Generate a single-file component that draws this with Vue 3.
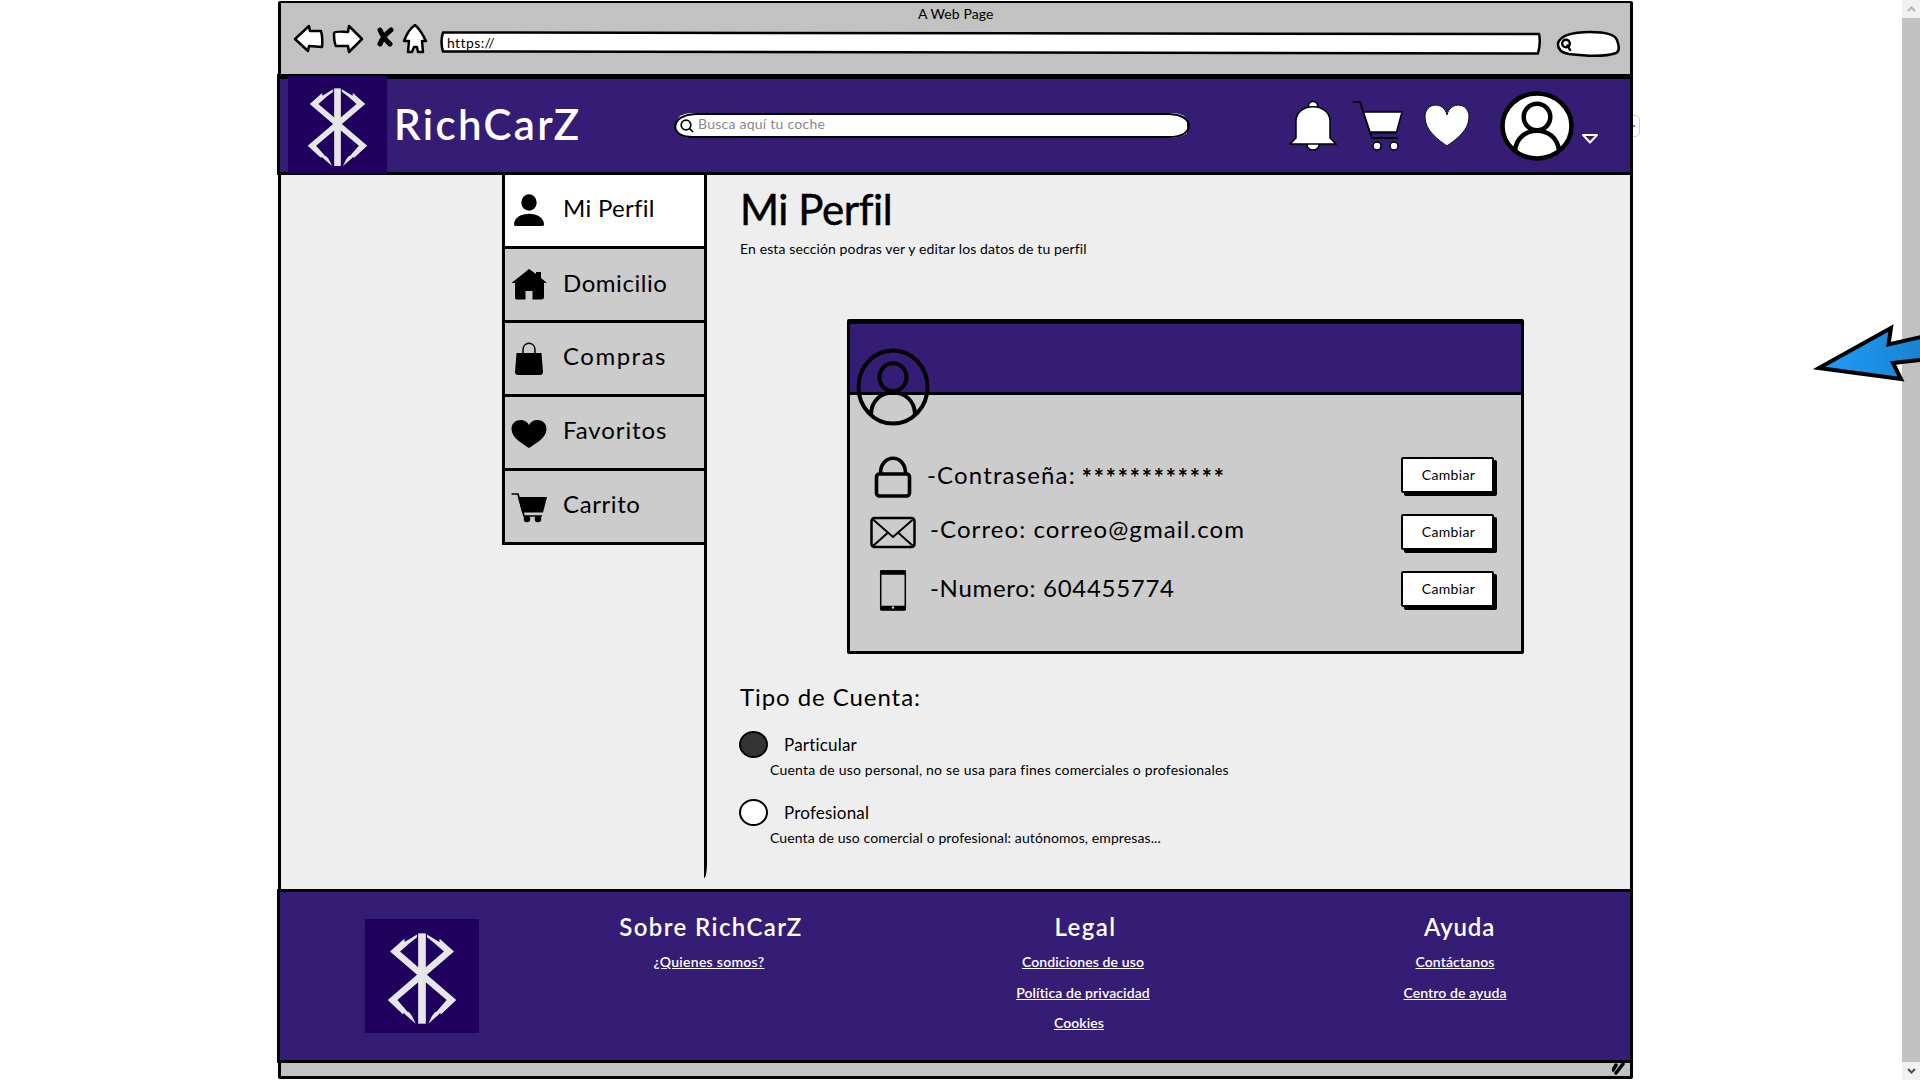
<script setup>
const nav = [
  { label: 'Mi Perfil', icon: 'user' },
  { label: 'Domicilio', icon: 'home' },
  { label: 'Compras', icon: 'bag' },
  { label: 'Favoritos', icon: 'heart' },
  { label: 'Carrito', icon: 'trolley' }
]
const rows = [
  { icon: 'lock', text: '-Contraseña:', secret: '************' },
  { icon: 'mail', text: '-Correo: correo@gmail.com' },
  { icon: 'phone', text: '-Numero: 604455774' }
]
const types = [
  { name: 'Particular', on: true, text: 'Cuenta de uso personal, no se usa para fines comerciales o profesionales' },
  { name: 'Profesional', on: false, text: 'Cuenta de uso comercial o profesional: autónomos, empresas...' }
]
const rune = '120,312 157,279 158,287 190,268 190,275 172,289 146,312 203,361 292,437 252,474 250,470 246,475 219,498 229,478 237,468 240,468 267,437 203,383'
</script>

<template>
  <div class="stage">
    <main class="window">
      <div class="chrome">
        <div class="page-title">A Web Page</div>
        <div class="toolbar">
          <svg class="back" width="31" height="30" viewBox="0 0 31 30"><path d="M2 15 L16 2 L17 7 L28 7 Q30 14 29 23 L16 22 L15 27 Z" /></svg>
          <svg class="forward" width="33" height="30" viewBox="0 0 33 30"><path d="M2 9 Q3 7 16 8 L17 2 L30 15 L17 28 L16 22 L4 22 Q2 19 2 9 Z" /></svg>
          <svg class="stop" width="20" height="24" viewBox="0 0 20 24"><path d="M4 3 Q8 12 14 17 M15 3 Q7 9 4 17" /></svg>
          <svg class="go-home" width="26" height="31" viewBox="0 0 26 31"><path d="M13 1 Q18 5 24 17 L20 17 L21 28 L16 28 L15 23 L12 23 L10 28 L6 28 L7 17 L2 17 Q6 6 13 1 Z" /></svg>
          <div class="url">
            <svg width="1102" height="26" viewBox="0 0 1102 26"><path d="M3 2.500 L1099 4 Q1101 12 1098 23.500 L3 21.500 Q0 12 3 2.500 Z" /></svg>
            <span>https://</span>
          </div>
          <svg class="find" width="66" height="28" viewBox="0 0 66 28"><path d="M13 24 Q1 22 2 13 Q6 2 34 2 Q58 2 61 10 Q65 21 60 23 Q46 28 13 24 Z" /><circle cx="10" cy="13.500" r="3.800" fill="none" /><path d="M11.500 15.500 L14 20" /></svg>
        </div>
      </div>

      <header class="top">
        <svg class="logo" viewBox="55 228 296 294" preserveAspectRatio="none"><rect x="55" y="228" width="296" height="294" fill="#20005f" /><g fill="#e6e6e6"><rect x="193" y="265" width="20" height="233" /><polygon :points="rune" /><polygon :points="rune" transform="translate(406 0) scale(-1 1)" /></g></svg>
        <div class="brand">RichCarZ</div>
        <div class="search">
          <svg width="518" height="30" viewBox="0 0 518 30"><path d="M4 9 Q6 3 18 2 H500 Q512 3 514 9 V22 Q510 26 498 27 H20 Q4 27 3 18 Z" fill="#fff" stroke="none" /><path d="M23 3 H496 Q516 4 516 16 Q513 26 496 26 H23 Q4 27 2 16 Q3 4 23 3 Z" fill="none" /><circle cx="13" cy="14" r="4.800" fill="none" stroke-width="1.700" /><path d="M16.500 17.500 L20 21" stroke-width="1.700" /></svg>
          <span>Busca aquí tu coche</span>
        </div>
        <svg class="bell" width="48" height="52" viewBox="0 0 48 52"><g fill="#fff" stroke="#000" stroke-width="1.500"><circle cx="24" cy="6" r="4.500" /><ellipse cx="24" cy="45" rx="6" ry="5" /><path d="M7 38 V21 C7 2 41 2 41 21 V38 L47 44 H1 Z" /></g></svg>
        <svg class="cart" width="52" height="54" viewBox="0 0 52 54"><path d="M1 3 H8 L20 39 H46 M17 33.500 H45" fill="none" stroke="#000" stroke-width="2" /><path d="M11.500 13 H50 L44.500 33 H18 Z" fill="#fff" stroke="#000" stroke-width="1.500" /><circle cx="25" cy="47" r="4" fill="#fff" stroke="#000" stroke-width="1.500" /><circle cx="42" cy="47" r="4" fill="#fff" stroke="#000" stroke-width="1.500" /></svg>
        <svg class="love" width="46" height="44" viewBox="0 0 46 44"><path d="M23 42 C15 36 1 27 1 13 C1 -2 20 -3 23 11 C26 -3 45 -2 45 13 C45 27 31 36 23 42 Z" fill="#fff" stroke="#111" /></svg>
        <svg class="avatar" width="74" height="70" viewBox="0 0 74 70" stroke="#000" stroke-width="4.500" fill="#fff"><ellipse cx="37" cy="35" rx="34.500" ry="32.500" /><circle cx="37" cy="26" r="13.300" /><path d="M15 60 C17 33 57 33 59 60" fill="none" /></svg>
        <svg class="caret" width="18" height="12" viewBox="0 0 18 12"><path d="M2 2 H16 L9 9.500 Z" fill="none" stroke="#fff" stroke-width="2" stroke-linejoin="round" /></svg>
      </header>

      <section class="page">
        <aside class="side">
          <nav>
            <a v-for="n in nav" :key="n.label" :class="['item', n.icon]">
              <svg width="36" height="36" viewBox="0 0 36 36">
                <template v-if="n.icon === 'user'"><ellipse cx="18" cy="10.500" rx="7.700" ry="8.200" /><path d="M3 32.500 C3 18 33 18 33 32.500 Q33 34 31 34 H5 Q3 34 3 32.500 Z" /></template>
                <path v-else-if="n.icon === 'home'" d="M18 2 L25 7 V5 H30 V11 L36 16 H33 V30 Q33 32.500 30.500 32.500 H21.500 V24 H14.500 V32.500 H5.500 Q4 32.500 4 30 V16 H0.500 Z" />
                <template v-else-if="n.icon === 'bag'"><path d="M12 13 V9 C12 0 24 0 24 9 V13" fill="none" stroke="#000" stroke-width="1.500" /><path d="M5.500 12 H30.500 L32 31 Q32 34 29 34 H7 Q4 34 4 31 Z" /></template>
                <path v-else-if="n.icon === 'heart'" d="M18 32 C12 28 .5 22 .5 13 C.5 3 14 1 18 9 C22 1 35.500 3 35.500 13 C35.500 22 24 28 18 32 Z" />
                <template v-else><path d="M.5 4 H7 L13 26 H31" fill="none" stroke="#000" stroke-width="1.700" /><path d="M7 7 H36 L32 22.500 H11 Z" /><circle cx="16" cy="29" r="3.300" /><circle cx="27" cy="29" r="3.300" /></template>
              </svg>
              <span>{{ n.label }}</span>
            </a>
          </nav>
        </aside>
        <article class="content">
          <h1>Mi Perfil</h1>
          <p class="lead">En esta sección podras ver y editar los datos de tu perfil</p>
          <section class="card">
            <div class="band"></div>
            <svg class="face" width="74" height="78" viewBox="0 0 74 78" fill="none" stroke="#000" stroke-width="4"><ellipse cx="37" cy="39" rx="34.500" ry="36.500" /><ellipse cx="37" cy="29.300" rx="13.500" ry="14" /><path d="M15 67 C15 37 59 37 59 67" /></svg>
            <div v-for="r in rows" :key="r.icon" :class="['row', r.icon]">
              <div class="glyph">
                <svg width="46" height="44" viewBox="0 0 46 44" fill="none" stroke="#000">
                  <template v-if="r.icon === 'lock'"><rect x="6.500" y="18" width="33" height="22" rx="3" stroke-width="3.600" /><path d="M10.500 18 C10 -3 36 -3 35.500 18" stroke-width="3.600" /></template>
                  <template v-else-if="r.icon === 'mail'"><rect x="1.500" y="7" width="43" height="29" rx="3" stroke-width="2.500" /><path d="M2.500 8 L23 26 L43.500 8 M3 35 L17.500 22 M43 35 L28.500 22" stroke-width="2" /></template>
                  <template v-else><rect x="10.700" y="2" width="24.600" height="39" rx="1.500" stroke-width="1.500" /><path d="M10 3.500 H36 M10 39 H36" stroke-width="4.500" /><circle cx="23" cy="38.500" r="1.200" fill="#ccc" stroke="none" /></template>
                </svg>
              </div>
              <div class="text">{{ r.text }}<b v-if="r.secret">{{ r.secret }}</b></div>
              <button>Cambiar</button>
            </div>
          </section>
          <h2>Tipo de Cuenta:</h2>
          <div v-for="t in types" :key="t.name" class="type">
            <div class="option"><i :class="{ on: t.on }"></i><span>{{ t.name }}</span></div>
            <p>{{ t.text }}</p>
          </div>
        </article>
      </section>

      <footer class="foot">
        <svg class="logo" viewBox="55 228 296 294" preserveAspectRatio="none"><rect x="55" y="228" width="296" height="294" fill="#20005f" /><g fill="#e6e6e6"><rect x="193" y="265" width="20" height="233" /><polygon :points="rune" /><polygon :points="rune" transform="translate(406 0) scale(-1 1)" /></g></svg>
        <div class="col about"><h3>Sobre RichCarZ</h3><a>¿Quienes somos?</a></div>
        <div class="col legal"><h3>Legal</h3><a>Condiciones de uso</a><a>Política de privacidad</a><a class="cookies">Cookies</a></div>
        <div class="col help"><h3>Ayuda</h3><a>Contáctanos</a><a>Centro de ayuda</a></div>
      </footer>
      <div class="status"><svg width="18" height="13" viewBox="0 0 18 13"><path d="M1 7 L4 2 M4 10 L11 1" stroke="#000" stroke-width="3.500" stroke-linecap="round" /></svg></div>
    </main>
    <div class="tab"><i></i></div>
    <svg class="pointer" width="110" height="64" viewBox="0 0 110 64"><defs><linearGradient id="g"><stop offset="0.200" stop-color="#1e98f2" /><stop offset="1" stop-color="#1a80cc" /></linearGradient></defs><path d="M9 47 L81 7 L78.500 23.500 L120 14 V38 L83 42 L91 58 Z" fill="url(#g)" stroke="#000" stroke-width="4" stroke-miterlimit="8" /></svg>
    <div class="scroll">
      <svg width="18" height="18" viewBox="0 0 18 18"><path d="M6 11 L9.500 7.500 L13 11" fill="none" stroke="#b5b5b5" stroke-width="2" /></svg>
      <div class="thumb"></div>
      <svg width="18" height="18" viewBox="0 0 18 18"><path d="M6 7 L9.500 10.500 L13 7" fill="none" stroke="#505050" stroke-width="2" /></svg>
    </div>
  </div>
</template>

<style>
body { margin: 0; background: #fff; overflow: hidden; }
</style>

<style scoped>
* { box-sizing: border-box; }
svg { display: block; flex: none; }
h1, h2, h3, p { margin: 0; font-weight: 400; }
.stage { position: relative; width: 1920px; height: 1080px; display: flex; padding-left: 278px; overflow: hidden; font: 14px/20px Lato, "Open Sans", sans-serif; color: #000; white-space: nowrap; }
.window { width: 1355px; height: 1078px; margin-top: 1px; border: 3px solid #000; border-top-width: 2px; border-radius: 2px; display: flex; flex-direction: column; background: #c2c2c2; flex: none; }
.chrome { height: 71px; }
.page-title { height: 21px; padding: 1px 0 0 637px; letter-spacing: 0.08px; }
.toolbar { display: flex; height: 40px; fill: #fff; stroke: #000; stroke-width: 2.500; stroke-linejoin: round; stroke-linecap: round; }
.back { margin: 0 0 0 12px; }
.forward { margin-left: 8px; }
.stop { margin: 3px 0 0 11px; stroke-width: 5; fill: none; }
.go-home { margin-left: 6px; }
.url { position: relative; margin: 6px 0 0 12px; width: 1102px; height: 26px; padding: 3px 0 0 7px; letter-spacing: 0.4px; }
.url svg { position: absolute; left: 0; top: 0; }
.url span { position: relative; stroke: none; }
.find { margin: 6px 0 0 14px; }
.top { height: 101px; margin: 0 -3px 0 -4px; border: 3px solid #000; border-top-width: 5px; background: #351d75; display: flex; flex: none; }
.top .logo { width: 99px; height: 98px; margin: -3px 0 0 8px; }
.brand { width: 286px; padding: 20px 0 0 7px; font-size: 42px; line-height: 50px; font-weight: 600; letter-spacing: 2.35px; color: #fff; }
.search { position: relative; width: 518px; height: 30px; margin: 32px 0 0 0; padding: 3px 0 0 25px; color: #888; letter-spacing: 0.25px; }
.search svg { position: absolute; left: 0; top: 0; stroke: #000; stroke-width: 2; }
.search span { position: relative; }
.bell { margin: 21px 0 0 98px; }
.cart { margin: 20px 0 0 15px; }
.love { margin: 25px 0 0 20px; }
.avatar { margin: 12px 0 0 30px; }
.caret { margin: 54px 0 0 7px; }
.page { height: 714px; background: #eee; display: flex; flex: none; }
.side { width: 204px; height: 703px; margin-left: 222px; border-right: 3px solid #000; border-bottom-right-radius: 3px 14px; }
.item { display: flex; height: 74px; margin-left: -1px; border-left: 3px solid #000; border-bottom: 3px solid #000; background: #ccc; padding: 18px 0 0 6px; font-size: 24px; line-height: 34px; }
.item svg { margin-right: 16px; }
.item span { margin-top: -1px; }
.item.user { padding-top: 17px; background: #fff; letter-spacing: 0.3px; }
.item.home { letter-spacing: 0.55px; }
.item.bag { letter-spacing: 1.5px; }
.item.heart { letter-spacing: 0.9px; }
.item.trolley { letter-spacing: 0.6px; }
.item.bag span, .item.heart span, .item.trolley span { margin-top: -2px; }
.item.trolley svg, .item.heart svg { margin-top: 1px; }
.content { padding: 9px 0 0 33px; }
h1 { font-size: 42px; line-height: 50px; letter-spacing: -0.4px; -webkit-text-stroke: 0.5px #000; }
.lead { margin-top: 5px; letter-spacing: 0.12px; }
.card { position: relative; width: 677px; height: 335px; margin: 60px 0 0 107px; border: 3px solid #000; border-top-width: 5px; background: #ccc; border-radius: 2px; }
.band { height: 71px; background: #351d75; border-bottom: 3px solid #000; }
.face { position: absolute; left: 6px; top: 24px; }
.row { display: flex; height: 56px; padding-left: 1px; font-size: 24px; line-height: 34px; }
.row.lock { margin-top: 60px; }
.row.phone { height: 50px; }
.glyph { width: 76px; padding-left: 19px; }
.lock .glyph { padding-top: 1px; }
.phone .glyph { padding-top: 2px; }
.row .text { width: 474px; }
.lock .text { padding-top: 3px; letter-spacing: 1.15px; }
.lock b { position: relative; top: 3px; font-weight: 700; letter-spacing: 1.8px; margin-left: 6px; }
.mail .text { padding: 1px 0 0 3px; letter-spacing: 1.09px; }
.phone .text { padding: 4px 0 0 3px; letter-spacing: 0.7px; }
button { width: 93px; height: 36px; padding: 0 0 0 2px; margin-top: 3px; border: 2px solid #000; border-radius: 2px; background: #fff; box-shadow: 3px 3px 0 #000; font: 14px/20px Lato, sans-serif; letter-spacing: 0.35px; color: #000; }
.lock button { margin-top: 2px; }
.phone button { margin-top: 4px; }
h2 { margin-top: 28px; font-size: 24px; line-height: 30px; letter-spacing: 0.93px; }
.type { height: 68px; padding-top: 19px; }
.option { display: flex; height: 27px; font-size: 17px; line-height: 27px; letter-spacing: 0.2px; }
.option i { width: 29px; height: 27px; border: 2px solid #000; border-radius: 50%; background: #fff; margin: 0 16px 0 -1px; }
.option i.on { background: #333; }
.type p { padding-left: 30px; margin-top: 2px; letter-spacing: 0.21px; }
.type:last-child p { letter-spacing: 0.11px; }
.foot { height: 174px; margin: 0 -3px 0 -4px; border: 3px solid #000; background: #351d75; display: flex; flex: none; color: #fff; font-weight: 600; }
.foot .logo { width: 114px; height: 114px; margin: 27px 0 0 85px; }
.col { padding-top: 20px; text-align: center; letter-spacing: 0.1px; }
.col a { display: block; text-decoration: underline; height: 30.500px; }
.col h3 { font-size: 24px; line-height: 30px; font-weight: 600; margin-bottom: 10px; letter-spacing: 1.4px; }
.about { width: 460px; letter-spacing: 0.28px; }
.about h3 { padding-left: 4px; }
.legal { width: 288px; }
.legal h3 { padding-left: 5px; }
.cookies { padding-right: 8px; }
.help { width: 200px; margin-left: 128px; }
.help h3 { padding-left: 9px; letter-spacing: 0.8px; }
.status { height: 13px; display: flex; justify-content: flex-end; }
.tab { align-self: flex-start; width: 7px; height: 22px; margin-top: 115px; border: 1px solid #ccc; border-left: 0; border-radius: 0 5px 5px 0; }
.tab i { display: block; width: 2px; height: 2px; margin-top: 9px; background: #4a90e2; }
.pointer { position: absolute; left: 1810px; top: 321px; z-index: 1; }
.scroll { width: 18px; height: 1080px; margin-left: auto; background: #f1f1f1; display: flex; flex-direction: column; }
.thumb { flex: 1; background: #c1c1c1; }
</style>
